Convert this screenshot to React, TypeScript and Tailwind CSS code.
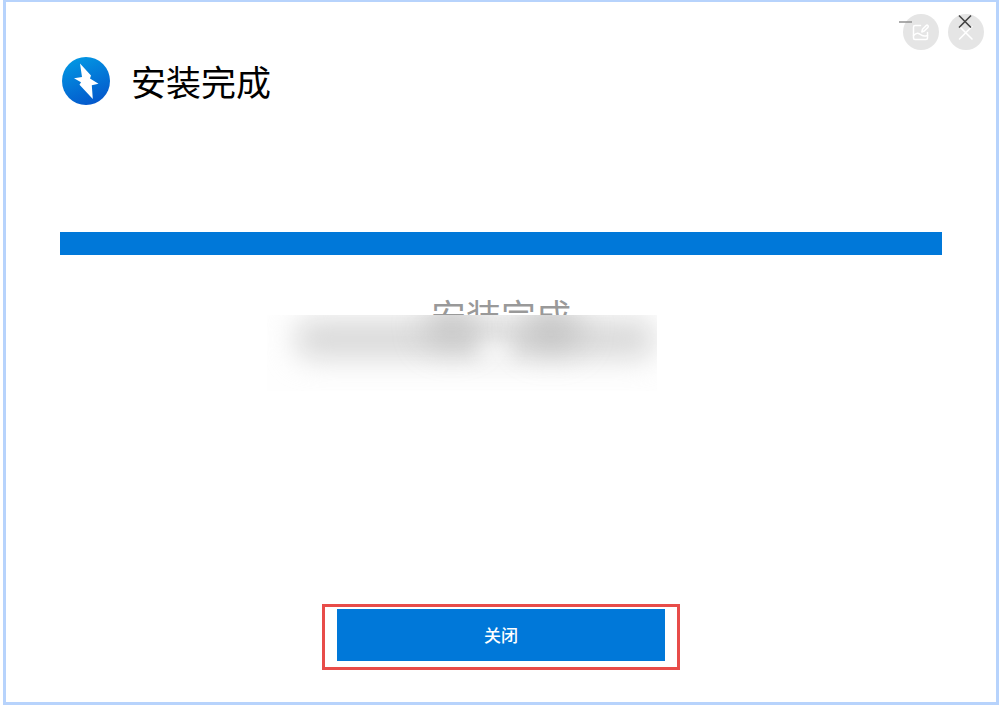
import React from "react";

function AppLogo() {
  return (
    <svg className="size-12 shrink-0" viewBox="0 0 48 48" aria-hidden="true">
      <defs>
        <linearGradient id="logo-fill" x1="0.3" y1="0" x2="0.7" y2="1">
          <stop offset="0" stopColor="#0297e3" />
          <stop offset="1" stopColor="#0456cb" />
        </linearGradient>
      </defs>
      <circle cx="24" cy="24" r="24" fill="url(#logo-fill)" />
      <path d="M18 6.500 29 18.500 28 21.500 36.500 26.800 29.800 28.300 30.800 42 17.500 27.800 19 25.300 12 21.200 20 20Z" fill="#fff" />
    </svg>
  );
}

function WindowControls() {
  return (
    <div className="absolute top-3 right-3 flex gap-[9px]">
      <button type="button" aria-label="编辑图片" className="flex size-9 items-center justify-center rounded-full bg-[#e5e5e5]">
        <svg className="size-9" viewBox="0 0 36 36" fill="none" stroke="#fff" strokeWidth="1.500" strokeLinecap="round" strokeLinejoin="round">
          <path d="M17.500 11.500H12a1.500 1.500 0 0 0-1.500 1.500V24a1.500 1.500 0 0 0 1.500 1.500H23a1.500 1.500 0 0 0 1.500-1.500V18.500" />
          <path d="M10.500 21.500c3.500-3.800 5.500-2.200 7.500-.7s4 1.700 6.500.7M18.800 18l.7-2.800 3.600-3.600a1.200 1.200 0 0 1 1.800 1.800l-3.600 3.600z" />
        </svg>
      </button>
      <button type="button" aria-label="关闭图片" className="flex size-9 items-center justify-center rounded-full bg-[#e5e5e5]">
        <svg className="size-9" viewBox="0 0 36 36" stroke="#fff" strokeWidth="1.600" strokeLinecap="round">
          <path d="m11.500 12.500 12.500 12.500M24 12.500 11.500 25" />
        </svg>
      </button>
      <button type="button" aria-label="最小化" className="absolute top-0 -left-1 h-4 w-[14px]">
        <svg className="h-4 w-[14px]" viewBox="0 0 14 16" stroke="#909090" strokeWidth="1.500">
          <path d="M0 8h13" />
        </svg>
      </button>
      <button type="button" aria-label="关闭窗口" className="absolute top-0 right-3 size-[14px]">
        <svg className="size-[14px]" viewBox="0 0 14 14" stroke="#444" strokeWidth="1.600">
          <path d="m1 1.500 12 12M13 1.500 1 13.500" />
        </svg>
      </button>
    </div>
  );
}

export default function App() {
  return (
    <div className="flex min-h-screen bg-white pr-px pb-1 pl-[3px] font-['Noto_Sans_CJK_SC',sans-serif]">
      <main className="relative flex flex-1 flex-col border-[3px] border-t-2 border-[#b7d3fc] px-[54px] pt-[55px] pb-8">
        <WindowControls />
        <header className="flex items-center gap-[21px] pl-[2px]">
          <AppLogo />
          <h1 className="text-[35px] leading-[48px] text-black">安装完成</h1>
        </header>
        <div
          role="progressbar"
          aria-label="安装进度"
          aria-valuenow={100}
          aria-valuemin={0}
          aria-valuemax={100}
          className="mt-[127px] h-[23px] bg-[#0078d9]"
        />
        <div className="relative mt-9 text-center">
          <p className="text-[35px] leading-[48px] text-[#999]">安装完成</p>
          <div className="absolute top-6 left-1/2 h-[76px] w-[390px] -translate-x-[234px] overflow-hidden bg-[#fefefe]">
            <div className="absolute top-1 left-7 h-10 w-[360px] rounded-2xl bg-[#dadada] blur-[14px]" />
            <div className="absolute -top-3 left-[158px] h-11 w-[54px] rounded-full bg-[#aaa]/50 blur-[16px]" />
            <div className="absolute -top-3 left-[254px] h-12 w-[60px] rounded-full bg-[#aaa]/50 blur-[16px]" />
            <div className="absolute top-6 left-[212px] h-7 w-8 rounded-full bg-white/70 blur-[10px]" />
          </div>
        </div>
        <div className="mx-auto mt-auto w-[358px] max-w-full border-[3px] border-[#e84c49] px-3 pt-[2px] pb-[6px]">
          <button type="button" className="block h-[52px] w-full bg-[#0078d9] text-[17px] font-medium text-white">
            关闭
          </button>
        </div>
      </main>
    </div>
  );
}
